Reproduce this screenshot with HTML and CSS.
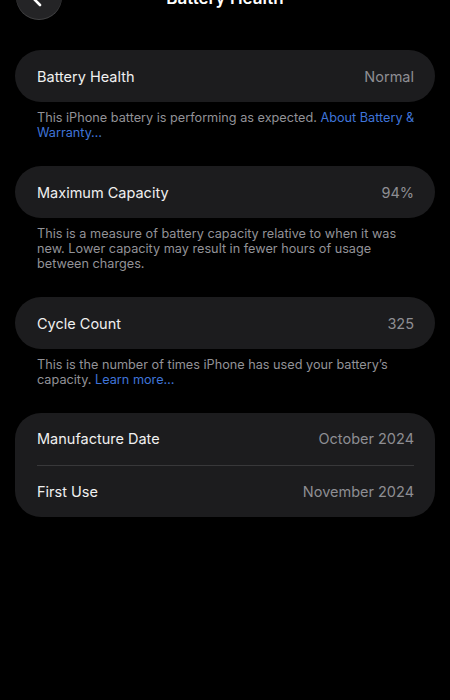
FILE: index.html
```html
<!DOCTYPE html>
<html lang="en">
<head>
<meta charset="utf-8">
<title>Battery Health</title>
<link rel="stylesheet" href="styles.css">
</head>
<body>
<div class="screen">
  <header class="nav">
    <button class="back" aria-label="Back">
      <svg width="22" height="22" viewBox="0 0 22 22"><path d="M13 3 L5 11 L13 19" fill="none" stroke="#fff" stroke-width="2.6" stroke-linecap="round" stroke-linejoin="round"/></svg>
    </button>
    <h1 class="title">Battery Health</h1>
  </header>

  <section class="group">
    <div class="card">
      <div class="row"><span class="label">Battery Health</span><span class="value">Normal</span></div>
    </div>
    <p class="note">This iPhone battery is performing as expected. <a class="link">About Battery &amp; Warranty…</a></p>
  </section>

  <section class="group">
    <div class="card">
      <div class="row"><span class="label">Maximum Capacity</span><span class="value">94%</span></div>
    </div>
    <p class="note">This is a measure of battery capacity relative to when it was new. Lower capacity may result in fewer hours of usage between charges.</p>
  </section>

  <section class="group">
    <div class="card">
      <div class="row"><span class="label">Cycle Count</span><span class="value">325</span></div>
    </div>
    <p class="note">This is the number of times iPhone has used your battery’s capacity. <a class="link">Learn more…</a></p>
  </section>

  <section class="group">
    <div class="card card-multi">
      <div class="row"><span class="label">Manufacture Date</span><span class="value">October 2024</span></div>
      <div class="sep"></div>
      <div class="row"><span class="label">First Use</span><span class="value">November 2024</span></div>
    </div>
  </section>
</div>
</body>
</html>
```

FILE: styles.css
```css
* { box-sizing: border-box; }
html, body {
  margin: 0;
  padding: 0;
  background: #000;
}
body {
  font-family: Inter, "Liberation Sans", Arial, sans-serif;
  color: #f2f2f2;
  width: 450px;
  height: 700px;
  overflow: hidden;
}
.screen {
  padding: 0 15px;
}
.nav {
  height: 46px;
  margin-top: -26px;
  margin-bottom: 30px;
  display: flex;
  align-items: center;
  justify-content: center;
  position: relative;
}
.back {
  position: absolute;
  left: 1px;
  top: 0;
  width: 46px;
  height: 46px;
  border-radius: 50%;
  border: none;
  background: #242426;
  box-shadow: inset 0 -1px 0 rgba(255,255,255,0.14);
  display: flex;
  align-items: center;
  justify-content: center;
  padding: 0;
}
.back svg { margin-left: -2px; }
.title {
  margin: 0;
  font-size: 17px;
  font-weight: 600;
  color: #fff;
  line-height: 22px;
  margin-top: 2px;
}
.group {
  margin-bottom: 26px;
}
.card {
  background: #1c1c1e;
  border-radius: 26px;
  padding: 0 21px 0 22px;
}
.row {
  height: 52px;
  display: flex;
  align-items: center;
  justify-content: space-between;
  font-size: 14.5px;
}
.card-multi .row { height: 51.5px; }
.label { color: #f0f0f0; }
.value { color: #8e8e93; }
.sep {
  height: 1px;
  background: #38383a;
}
.note {
  margin: 8px 0 0;
  padding: 0 18px 0 22px;
  font-size: 12.7px;
  line-height: 15px;
  color: #929297;
}
.link {
  color: #3f74d9;
}
```
